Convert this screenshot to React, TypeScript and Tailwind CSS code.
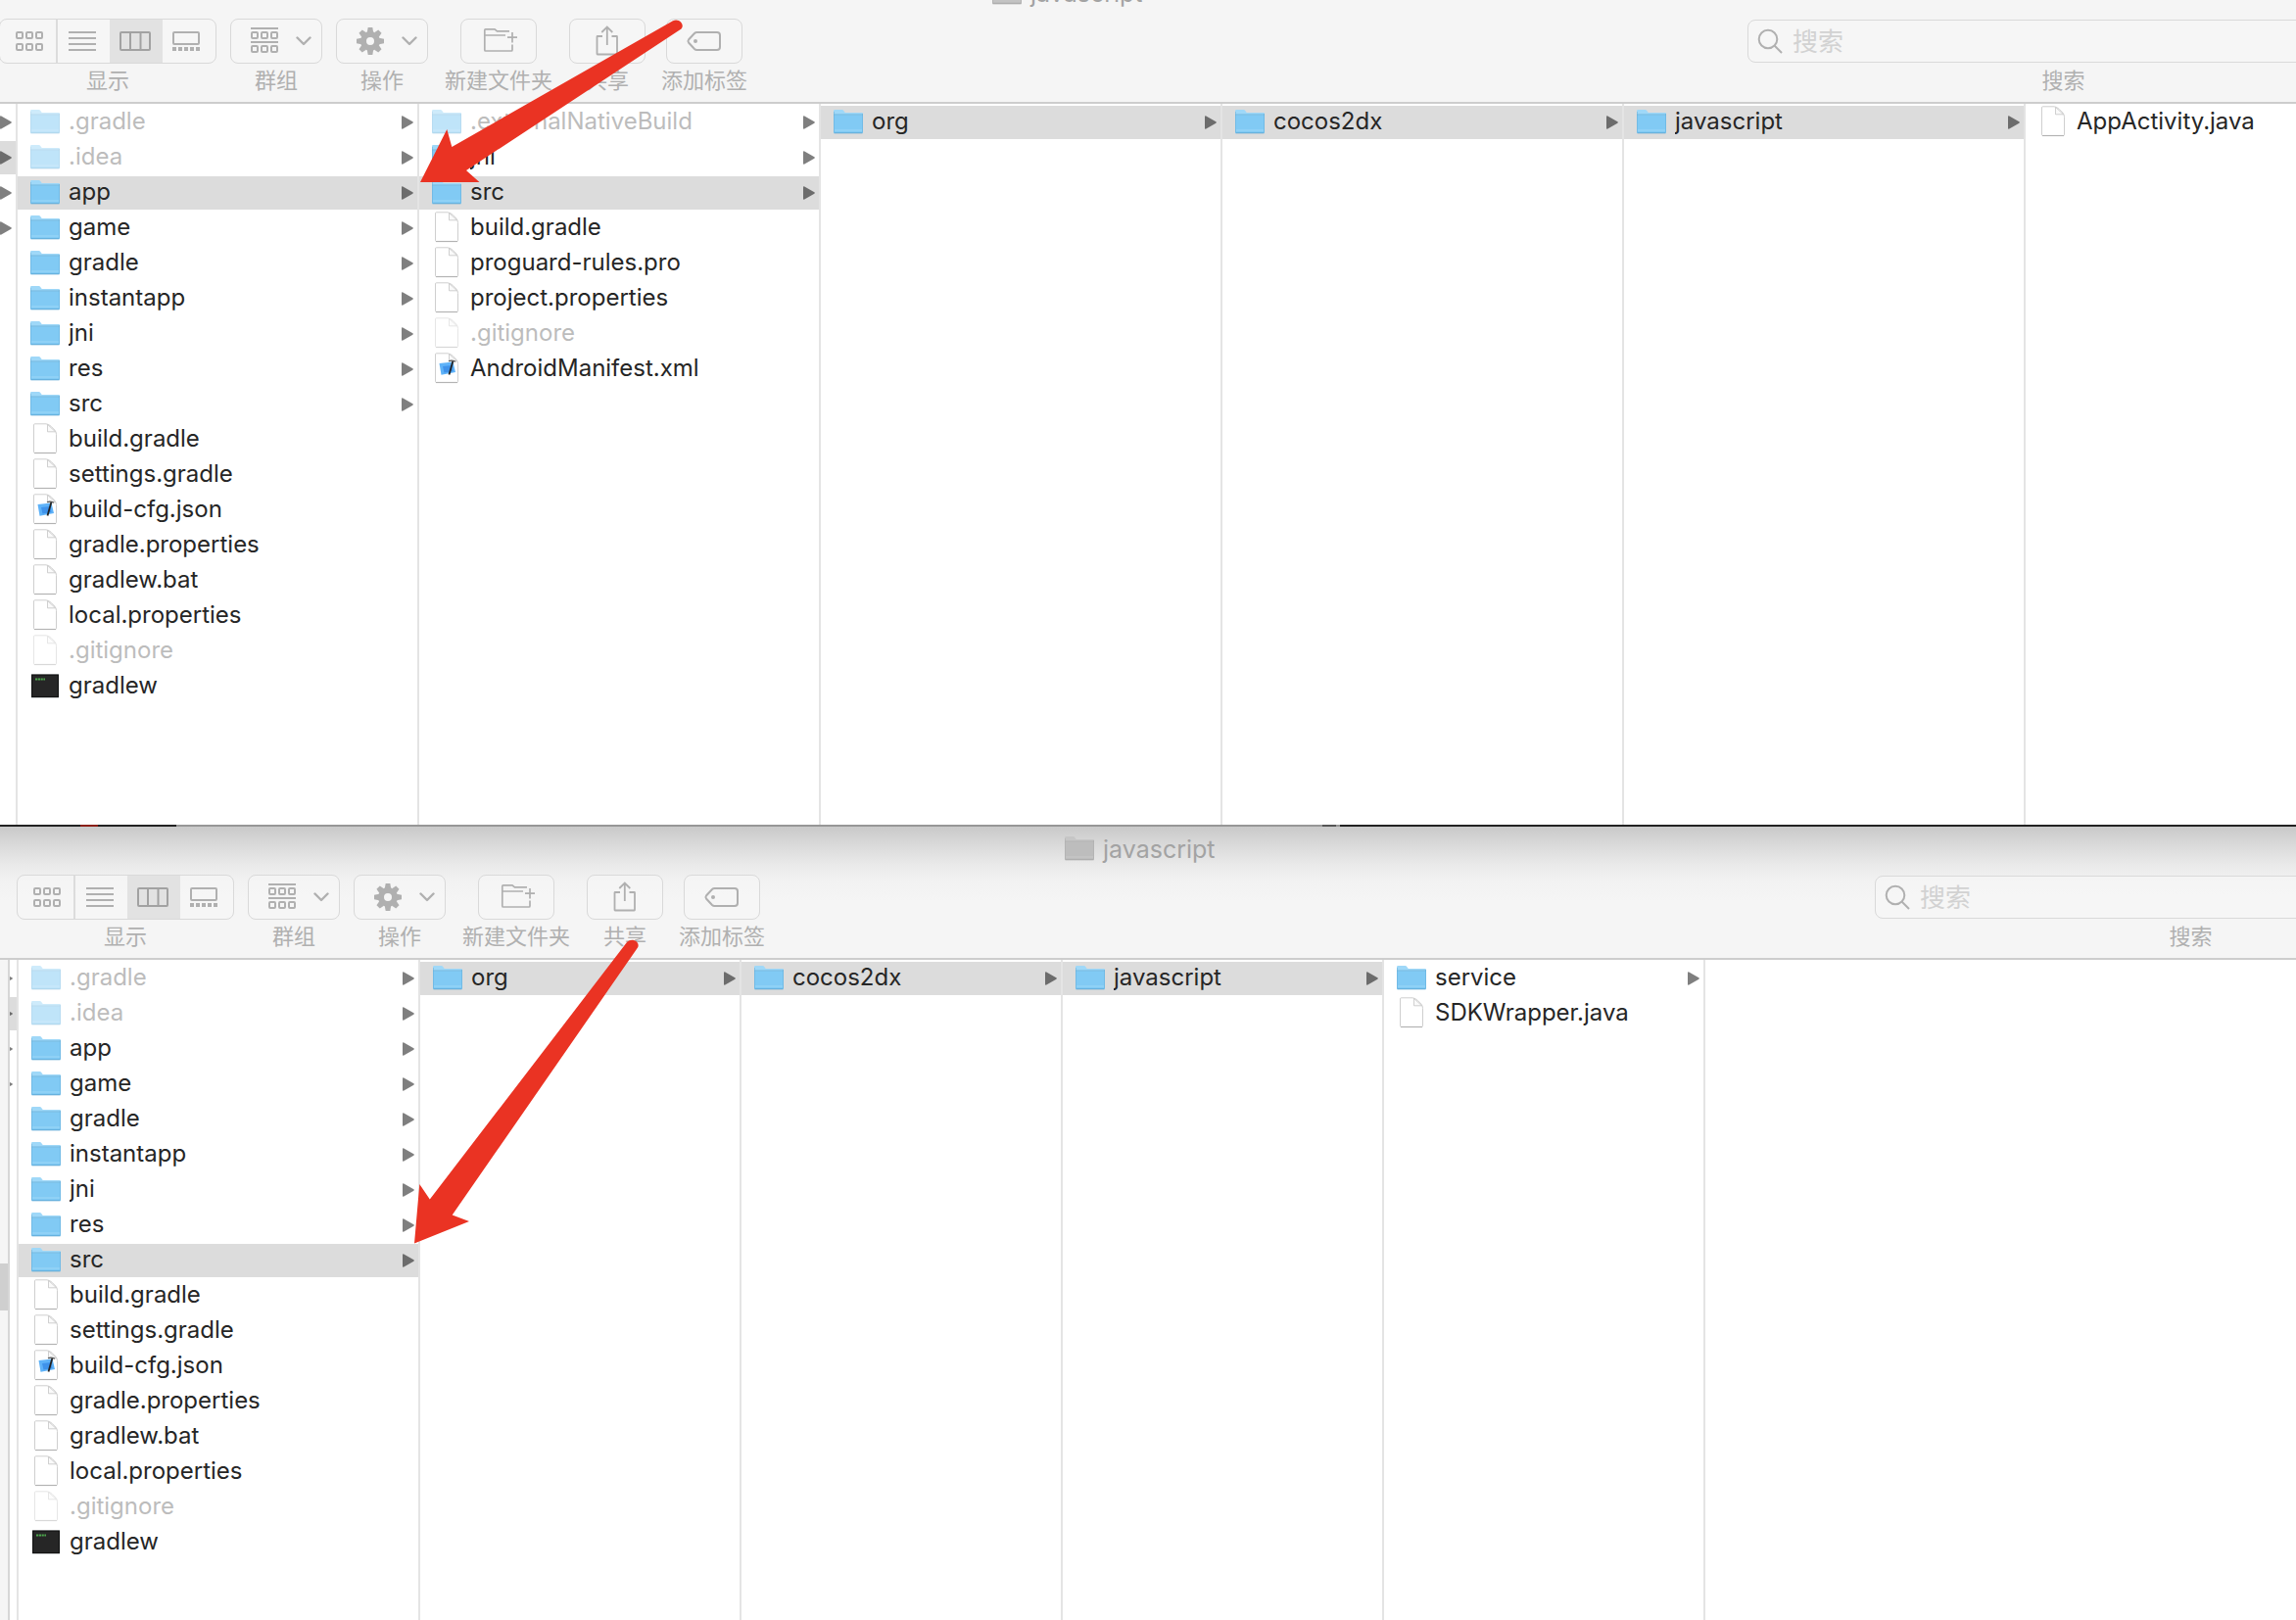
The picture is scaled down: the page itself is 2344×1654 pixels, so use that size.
import type { ReactNode } from "react";

type Kind = "folder" | "doc" | "xcode" | "exec";

interface Entry {
  name: string;
  kind: Kind;
  dim?: boolean;
  selected?: boolean;
}

const folder = (name: string, opts: Partial<Entry> = {}): Entry => ({ name, kind: "folder", ...opts });
const doc = (name: string, opts: Partial<Entry> = {}): Entry => ({ name, kind: "doc", ...opts });

const projectRoot = (open: string): Entry[] => [
  folder(".gradle", { dim: true }),
  folder(".idea", { dim: true }),
  ...["app", "game", "gradle", "instantapp", "jni", "res", "src"].map(n => folder(n, { selected: n === open })),
  doc("build.gradle"),
  doc("settings.gradle"),
  doc("build-cfg.json", { kind: "xcode" }),
  doc("gradle.properties"),
  doc("gradlew.bat"),
  doc("local.properties"),
  doc(".gitignore", { dim: true }),
  doc("gradlew", { kind: "exec" }),
];

const appFolder: Entry[] = [
  folder(".externalNativeBuild", { dim: true }),
  folder("jni"),
  folder("src", { selected: true }),
  doc("build.gradle"),
  doc("proguard-rules.pro"),
  doc("project.properties"),
  doc(".gitignore", { dim: true }),
  doc("AndroidManifest.xml", { kind: "xcode" }),
];

function FolderIcon({ gray }: { gray?: boolean }) {
  const c = gray
    ? { tab: "#c6c6c6", body: "#bdbdbd", edge: "#a9a9a9", hi: "#cdcdcd" }
    : { tab: "#9fd8f8", body: "#81caf4", edge: "#5fa9d4", hi: "#a5dcfa" };
  return (
    <svg width="30" height="34" viewBox="0 0 30 34" className="shrink-0">
      <path d="M0 5.2Q0 4 1.2 4H8.6Q9.6 4 10.3 5L11.3 6.4Q11.8 7 12.8 7H29Q30 7 30 8V26.5Q30 28 28.8 28H1.2Q0 28 0 26.8Z" fill={c.tab} />
      <path d="M0 9.5H30V27Q30 28 29 28H1Q0 28 0 27Z" fill={c.body} />
      <path d="M0 9H30" stroke={c.edge} strokeWidth="0.7" />
      <path d="M1 25H29" stroke={c.hi} strokeWidth="0.8" />
      <path d="M0.4 6V27M29.6 8V27" stroke={c.edge} strokeWidth="0.5" />
      <path d="M0.5 27.8H29.5" stroke={c.edge} strokeWidth="1" />
    </svg>
  );
}

function DocIcon({ badge }: { badge?: boolean }) {
  return (
    <svg width="30" height="34" viewBox="0 0 30 34" className="shrink-0">
      <path d="M4.5 0.8H16Q19 1.2 21 3.2L24.8 7Q26.5 8.8 26.5 11.5V29.5Q26.5 30.4 25.6 30.4H4.4Q3.5 30.4 3.5 29.5V1.8Q3.5 0.8 4.5 0.8Z" fill="#fff" stroke="#c9c9c9" strokeWidth="0.9" />
      <path d="M17.5 1.4V8.8H25.6Z" fill="#fafafa" stroke="#c4c4c4" strokeWidth="0.8" />
      <path d="M4 30.6H26" stroke="#b0b0b0" strokeWidth="1" />
      {badge && (
        <>
          <path d="M7.5 11L21.500 9.5L24 20L9.5 22.8Z" fill="#5eb2f8" />
          <path d="M11 14L20 13L21.5 19L12.5 20.5Z" fill="#3f92ea" />
          <path d="M17 8.8Q20 7.2 24 9.2" stroke="#555" strokeWidth="1.2" fill="none" />
          <path d="M21.3 9L17.5 22.5" stroke="#222" strokeWidth="1.8" />
        </>
      )}
    </svg>
  );
}

function ExecIcon() {
  return (
    <svg width="30" height="34" viewBox="0 0 30 34" className="shrink-0">
      <rect x="1" y="4.5" width="28" height="23.8" fill="#9aa3a6" />
      <rect x="1.6" y="5" width="26.8" height="22.6" fill="#262626" stroke="#0c0c0c" strokeWidth="1" />
      <path d="M5 9.5H15" stroke="#4da64d" strokeWidth="2.2" strokeDasharray="2.2 0.6" />
    </svg>
  );
}

function EntryIcon({ kind }: { kind: Kind }) {
  if (kind === "folder") return <FolderIcon />;
  if (kind === "exec") return <ExecIcon />;
  return <DocIcon badge={kind === "xcode"} />;
}

function Disclosure({ active }: { active?: boolean }) {
  return (
    <svg width="12" height="14" viewBox="0 0 12 14" className="shrink-0">
      <path d="M0 1.2Q0 -0.2 1.3 0.5L11.4 6.3Q12.2 7 11.4 7.7L1.3 13.5Q0 14.2 0 12.8Z" fill={active ? "#6c6c6c" : "#7f7f7f"} />
    </svg>
  );
}

function Row({ entry }: { entry: Entry }) {
  return (
    <li>
      <button className={`flex h-[34px] w-full items-center pr-1 pl-[13px] text-left ${entry.selected ? "bg-[#dcdcdc]" : ""}`}>
        <span className={`flex min-w-0 flex-1 items-center gap-[9px] ${entry.dim ? "opacity-50" : ""}`}>
          <EntryIcon kind={entry.kind} />
          <span className={`truncate pb-0.5 leading-8 ${entry.dim ? "text-[#7c7c7c]" : "text-[#262626]"}`}>{entry.name}</span>
        </span>
        {entry.kind === "folder" && <Disclosure active={entry.selected} />}
      </button>
    </li>
  );
}

function Column({ entries, width }: { entries: Entry[]; width: string }) {
  return (
    <ul className={`flex shrink-0 flex-col gap-0.5 border-r-2 border-[#e4e4e4] pt-0.5 ${width}`}>
      {entries.map(e => <Row key={e.name} entry={e} />)}
    </ul>
  );
}

// what is left in view of the parent folder's column
function ParentColumn({ width }: { width: string }) {
  return (
    <ul className={`flex shrink-0 flex-col gap-0.5 overflow-hidden border-r-2 border-[#e4e4e4] pt-0.5 ${width}`}>
      {[0, 1, 2, 3].map(i => (
        <li key={i} className={`flex h-[34px] items-center justify-end pr-1 ${i === 1 ? "bg-[#dcdcdc]" : ""}`}>
          <Disclosure active={i === 1} />
        </li>
      ))}
    </ul>
  );
}

const gridSquares = (y: number, x0: number) =>
  [0, 10, 20].map(dx => <rect key={`${y}-${dx}`} x={x0 + dx + 1} y={y + 1} width="6" height="6" rx="1" />);

function ToolItem({ label, width, children }: { label: string; width: string; children: ReactNode }) {
  return (
    <div className={`flex shrink-0 flex-col items-center gap-0.5 ${width}`}>
      {children}
      <span className="text-[22px] leading-[30px] whitespace-nowrap text-[#b0b0b0]">{label}</span>
    </div>
  );
}

const boxed = "flex h-[46px] items-center justify-center rounded-lg border border-[#d9d9d9] bg-[#f6f6f6]/60 text-[#b0b0b0]";

function ViewSwitch() {
  return (
    <div className="flex h-[46px] w-[222px] overflow-hidden rounded-lg border border-[#d9d9d9] bg-[#f6f6f6]/60 text-[#b0b0b0]">
      <button aria-label="图标" className="w-[59px] border-r-2 border-[#dcdcdc]">
        <svg width="57" height="44" viewBox="0 20 57 44" fill="none" stroke="currentColor" strokeWidth="2">
          {gridSquares(32, 16)}
          {gridSquares(44, 16)}
        </svg>
      </button>
      <button aria-label="列表" className="w-[53px]">
        <svg width="53" height="44" viewBox="59 20 53 44" fill="none" stroke="currentColor" strokeWidth="2">
          <path d="M70 33H98M70 39H98M70 45H98M70 51H98" />
        </svg>
      </button>
      <button aria-label="分栏" aria-pressed="true" className="w-[54px] bg-[#e2e2e2] text-[#a2a2a2]">
        <svg width="54" height="44" viewBox="112 20 54 44" fill="none" stroke="currentColor" strokeWidth="2">
          <rect x="123" y="33" width="30" height="18" rx="1" />
          <path d="M133 33V51M143.5 33V51" />
        </svg>
      </button>
      <button aria-label="画廊" className="w-[54px]">
        <svg width="54" height="44" viewBox="166 20 54 44" fill="none" stroke="currentColor" strokeWidth="2">
          <rect x="177" y="33" width="26" height="12" rx="1" />
          <path d="M176 50H204" strokeWidth="4" strokeDasharray="4 2" />
        </svg>
      </button>
    </div>
  );
}

function Chevron() {
  return (
    <svg width="16" height="10" viewBox="0 0 16 10" fill="none" stroke="currentColor" strokeWidth="2.4" strokeLinecap="round" strokeLinejoin="round">
      <path d="M1.5 1.5L8 8L14.5 1.5" />
    </svg>
  );
}

function Toolbar() {
  return (
    <>
      <ToolItem label="显示" width="w-[222px]">
        <ViewSwitch />
      </ToolItem>
      <ToolItem label="群组" width="ml-[14px] w-[94px]">
        <button aria-label="群组" className={`${boxed} w-full gap-[18px] pl-2.5`}>
          <svg width="28" height="28" viewBox="0 0 28 28" fill="none" stroke="currentColor" strokeWidth="2">
            <path d="M0 1H28M0 15H28" />
            {gridSquares(4, 0)}
            {gridSquares(18, 0)}
          </svg>
          <Chevron />
        </button>
      </ToolItem>
      <ToolItem label="操作" width="ml-[14px] w-[94px]">
        <button aria-label="操作" className={`${boxed} w-full gap-[18px] pl-2.5`}>
          <svg width="28" height="28" viewBox="-14 -14 28 28" fill="none" stroke="currentColor">
            <circle r="7" strokeWidth="6" />
            {[0, 45, 90, 135, 180, 225, 270, 315].map(a => (
              <path key={a} d="M-3.2 -9L-2.3 -14H2.3L3.2 -9Z" fill="currentColor" stroke="none" transform={`rotate(${a})`} />
            ))}
          </svg>
          <Chevron />
        </button>
      </ToolItem>
      <ToolItem label="新建文件夹" width="ml-4 w-[112px]">
        <button aria-label="新建文件夹" className={`${boxed} w-[78px]`}>
          <svg width="40" height="32" viewBox="0 0 40 32" fill="none" stroke="currentColor" strokeWidth="1.7">
            <path d="M31 5.8H18.5L16 3.8H6.8Q5.8 3.8 5.8 4.8V25Q5.8 26 6.8 26H33Q34 26 34 25V19.5M5.8 10H27" />
            <path d="M34 7V17.5M29 12.2H39" />
          </svg>
        </button>
      </ToolItem>
      <ToolItem label="共享" width="ml-4 w-[78px]">
        <button aria-label="共享" className={`${boxed} w-full`}>
          <svg width="40" height="32" viewBox="0 0 40 32" fill="none" stroke="currentColor" strokeWidth="1.8">
            <path d="M15 11H10Q9.5 11 9.5 11.5V29Q9.5 29.5 10 29.5H29.5Q30 29.5 30 29V11.5Q30 11 29.5 11H24.5" />
            <path d="M19.8 20V1.5M14.3 7L19.8 1.5L25.3 7" />
          </svg>
        </button>
      </ToolItem>
      <ToolItem label="添加标签" width="ml-4 w-[88px]">
        <button aria-label="添加标签" className={`${boxed} w-[78px]`}>
          <svg width="40" height="32" viewBox="0 0 40 32" fill="none" stroke="currentColor" strokeWidth="2">
            <path d="M12.5 7H33Q36 7 36 10V22Q36 25 33 25H12.5Q11 25 10 24L4 17.5Q2.8 16 4 14.5L10 8Q11 7 12.5 7Z" />
            <circle cx="11" cy="16" r="2" fill="currentColor" stroke="none" />
          </svg>
        </button>
      </ToolItem>
    </>
  );
}

function Search({ id }: { id: string }) {
  return (
    <div className="ml-auto flex w-[645px] shrink-0 flex-col items-center gap-[3px] pt-px">
      <div className="flex h-11 w-full items-center gap-[10px] rounded-lg border border-[#d9d9d9] bg-[#f6f6f6]/60 pl-[9px]">
        <svg width="26" height="26" viewBox="0 0 26 26" fill="none" stroke="#b0b0b0" strokeWidth="2" className="shrink-0">
          <circle cx="11" cy="11" r="9.3" />
          <path d="M17.5 17.5L25 25" />
        </svg>
        <input id={id} type="text" placeholder="搜索" className="min-w-0 flex-1 bg-transparent pt-0.5 text-[26px] leading-8 outline-none placeholder:text-[#d2d2d2]" />
      </div>
      <label htmlFor={id} className="text-[22px] leading-[30px] text-[#b0b0b0]">搜索</label>
    </div>
  );
}

function TitleBar({ pad }: { pad: string }) {
  return (
    <div className={`flex h-[45px] items-center gap-[9px] ${pad}`}>
      <FolderIcon gray />
      <span className="text-[25px] leading-8 text-[#a3a3a3]">javascript</span>
    </div>
  );
}

export default function App() {
  return (
    <div className="relative flex min-h-screen w-full flex-col overflow-hidden bg-white font-['Inter','Noto_Sans_CJK_SC',sans-serif] text-[24px] leading-[34px]">
      {/* first window, its title bar cut by the top edge */}
      <section className="overflow-hidden">
        <header className="-mt-[30px] h-[136px] border-b-2 border-[#cdcdcd] bg-[#f5f5f5]">
          <TitleBar pad="pl-[1013px]" />
          <div className="-mr-[85px] -ml-px flex items-start pt-1">
            <Toolbar />
            <Search id="search-top" />
          </div>
        </header>
        <div className="flex min-h-[736px]">
          <ParentColumn width="w-[18px]" />
          <Column width="w-[410px]" entries={projectRoot("app")} />
          <Column width="w-[410px]" entries={appFolder} />
          <Column width="w-[410px]" entries={[folder("org", { selected: true })]} />
          <Column width="w-[410px]" entries={[folder("cocos2dx", { selected: true })]} />
          <Column width="w-[410px]" entries={[folder("javascript", { selected: true })]} />
          <ul className="flex-1 pt-0.5">
            <Row entry={doc("AppActivity.java")} />
          </ul>
        </div>
      </section>

      {/* strip of whatever lies behind the two windows */}
      <div className="flex h-0.5 bg-[#979797]">
        <div className="w-[82px] bg-[#222]" />
        <div className="w-[18px] bg-[#8a1f17]" />
        <div className="w-20 bg-[#222]" />
        <div className="ml-[1170px] w-[14px] bg-[#555]" />
        <div className="ml-1 flex-1 bg-[#222]" />
      </div>

      {/* second window */}
      <section className="flex flex-1 flex-col overflow-hidden">
        <header className="h-[136px] border-b-2 border-[#cdcdcd] bg-[#f5f5f5] bg-[linear-gradient(#c9c9c9_0px,#d9d9d9_18px,#e9e9e9_38px,#f2f2f2_56px,#f5f5f5_76px)]">
          <TitleBar pad="pl-[1087px]" />
          <div className="-mr-[215px] ml-[17px] flex items-start pt-1">
            <Toolbar />
            <Search id="search-bottom" />
          </div>
        </header>
        <div className="flex flex-1">
          <aside className="w-[10px] shrink-0 border-r-2 border-[#d6d6d6] bg-[#f5f5f5] pt-[310px]">
            <div className="h-12 bg-[#cfcfcf]" />
          </aside>
          <ParentColumn width="w-[9px]" />
          <Column width="w-[410px]" entries={projectRoot("src")} />
          <Column width="w-[328px]" entries={[folder("org", { selected: true })]} />
          <Column width="w-[328px]" entries={[folder("cocos2dx", { selected: true })]} />
          <Column width="w-[328px]" entries={[folder("javascript", { selected: true })]} />
          <Column width="w-[328px]" entries={[folder("service"), doc("SDKWrapper.java")]} />
        </div>
      </section>

      {/* red pointers drawn over both windows */}
      <svg width="720" height="1300" viewBox="0 0 720 1300" fill="#ea3323" className="pointer-events-none absolute top-0 left-0">
        <path d="M429 186L456.3 132L461.3 150L687 21.2C693 18 699.5 25 695.5 29.5L476 174L489.5 186Z" />
        <path d="M423 1269.5L428.3 1209L438.8 1224.5L640 962C645.5 956.5 654 962 651 967.5L461.7 1240.5L479 1247Z" />
      </svg>
    </div>
  );
}
